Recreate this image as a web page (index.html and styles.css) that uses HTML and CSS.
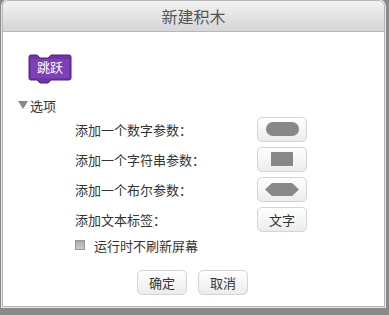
FILE: index.html
```html
<!DOCTYPE html>
<html lang="zh-CN">

<head>
    <meta charset="UTF-8">
    <title>新建积木</title>
    <link rel="stylesheet" href="styles.css">
</head>

<body>
    <div class="dialog">
        <div class="title">新建积木</div>
        <div class="content">
            <div class="block-wrap">
                <svg class="block" width="44" height="32" viewBox="0 0 44 32">
                    <path d="M3 2 H9 L12 5 H20 L23 2 H41 Q43 2 43 4 V25 Q43 27 41 27 H23 L20 30 H12 L9 27 H3 Q1 27 1 25 V4 Q1 2 3 2 Z"
                        fill="#6f35a8" stroke="#4e2380" stroke-width="1" />
                    <rect x="3" y="6" width="38" height="19" fill="#7d40b8" />
                </svg>
                <span class="block-text">跳跃</span>
            </div>
            <div class="options">
                <span class="arrow"></span>选项
            </div>
            <div class="rows">
                <div class="row">
                    <span class="label">添加一个数字参数：</span>
                    <button class="btn"><span class="shape oval"></span></button>
                </div>
                <div class="row">
                    <span class="label">添加一个字符串参数：</span>
                    <button class="btn"><span class="shape rect"></span></button>
                </div>
                <div class="row">
                    <span class="label">添加一个布尔参数：</span>
                    <button class="btn">
                        <svg width="34" height="13" viewBox="0 0 34 13">
                            <polygon points="7,0 27,0 34,6.5 27,13 7,13 0,6.5" fill="#888" />
                        </svg>
                    </button>
                </div>
                <div class="row">
                    <span class="label">添加文本标签：</span>
                    <button class="btn">文字</button>
                </div>
            </div>
            <div class="check">
                <span class="box"></span>运行时不刷新屏幕
            </div>
            <div class="actions">
                <button class="btn act">确定</button>
                <button class="btn act">取消</button>
            </div>
        </div>
    </div>
</body>

</html>
```

FILE: styles.css
```css
* {
    margin: 0;
    padding: 0;
    box-sizing: border-box;
    font-family: "Noto Sans CJK SC", "Liberation Sans", sans-serif;
}

body {
    width: 389px;
    height: 315px;
    background: #8a8a8a;
    overflow: hidden;
}

.dialog {
    width: 383px;
    height: 307px;
    margin-left: 2px;
    background: #fff;
    border: 1px solid #b5b5b5;
    border-radius: 7px 7px 0 0;
    box-shadow: 0 0 0 1px #e6e6e6;
}

.title {
    height: 31px;
    border-bottom: 1px solid #b8b8b8;
    border-radius: 6px 6px 0 0;
    background: linear-gradient(#f2f2f2, #d6d6d6);
    text-align: center;
    font-size: 16px;
    line-height: 30px;
    color: #555;
}

.content {
    padding-left: 15px;
    color: #333;
    font-size: 13px;
}

.block-wrap {
    position: relative;
    width: 44px;
    height: 32px;
    margin: 21px 0 0 10px;
}

.block-text {
    position: absolute;
    left: 0;
    top: 3px;
    width: 44px;
    text-align: center;
    color: #fff;
    font-size: 13px;
    line-height: 22px;
}

.options {
    display: flex;
    align-items: center;
    height: 20px;
    margin-top: 10px;
}

.arrow {
    width: 0;
    height: 0;
    border-left: 5px solid transparent;
    border-right: 5px solid transparent;
    border-top: 8px solid #888;
    margin-right: 2px;
}

.rows {
    margin-top: -1px;
    padding-left: 57px;
    width: 289px;
}

.row {
    display: flex;
    justify-content: space-between;
    align-items: center;
    height: 30px;
}

.btn {
    width: 50px;
    height: 25px;
    border: 1px solid #d4d4d4;
    border-radius: 5px;
    background: linear-gradient(#ffffff, #ececec);
    display: flex;
    align-items: center;
    justify-content: center;
    font-size: 13px;
    color: #333;
}

.shape {
    display: block;
    background: #888;
}

.oval {
    width: 33px;
    height: 14px;
    border-radius: 7px;
}

.rect {
    width: 22px;
    height: 14px;
}

.check {
    display: flex;
    align-items: center;
    margin: 1px 0 0 57px;
    height: 20px;
}

.box {
    width: 10px;
    height: 10px;
    background: linear-gradient(#aaa, #ccc);
    border: 1px solid #999;
    margin-right: 9px;
}

.actions {
    display: flex;
    gap: 11px;
    margin: 15px 0 0 119px;
}
```
